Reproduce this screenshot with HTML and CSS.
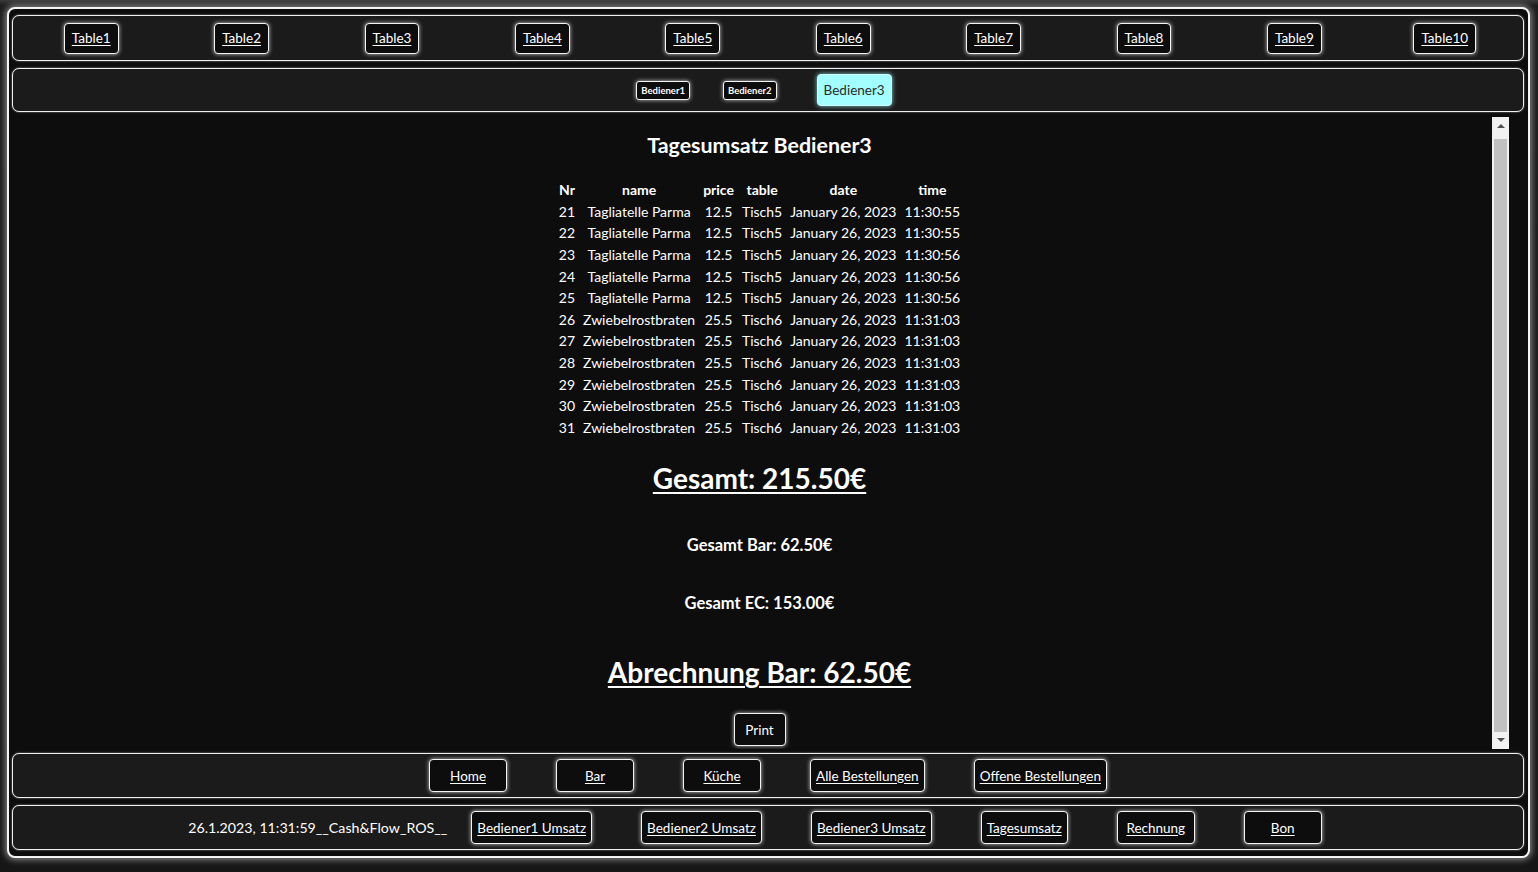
FILE: index.html
```html
<!DOCTYPE html>
<html lang="de">
<head>
<meta charset="utf-8">
<title>Cash&amp;Flow ROS</title>
<link rel="stylesheet" href="styles.css">
</head>
<body>
<div class="app">
  <div class="bar tables">
    <div class="cell"><a class="btn" href="#">Table1</a></div>
    <div class="cell"><a class="btn" href="#">Table2</a></div>
    <div class="cell"><a class="btn" href="#">Table3</a></div>
    <div class="cell"><a class="btn" href="#">Table4</a></div>
    <div class="cell"><a class="btn" href="#">Table5</a></div>
    <div class="cell"><a class="btn" href="#">Table6</a></div>
    <div class="cell"><a class="btn" href="#">Table7</a></div>
    <div class="cell"><a class="btn" href="#">Table8</a></div>
    <div class="cell"><a class="btn" href="#">Table9</a></div>
    <div class="cell"><a class="btn" href="#">Table10</a></div>
  </div>
  <div class="bar waiters">
    <button class="btn small w1">Bediener1</button>
    <button class="btn small w2">Bediener2</button>
    <button class="btn active">Bediener3</button>
  </div>
  <div class="main">
    <div class="viewport">
      <div class="report">
        <h2 class="title">Tagesumsatz Bediener3</h2>
        <table class="orders">
          <thead>
            <tr><th>Nr</th><th>name</th><th>price</th><th>table</th><th>date</th><th>time</th></tr>
          </thead>
          <tbody>
            <tr><td>21</td><td>Tagliatelle Parma</td><td>12.5</td><td>Tisch5</td><td>January 26, 2023</td><td>11:30:55</td></tr>
            <tr><td>22</td><td>Tagliatelle Parma</td><td>12.5</td><td>Tisch5</td><td>January 26, 2023</td><td>11:30:55</td></tr>
            <tr><td>23</td><td>Tagliatelle Parma</td><td>12.5</td><td>Tisch5</td><td>January 26, 2023</td><td>11:30:56</td></tr>
            <tr><td>24</td><td>Tagliatelle Parma</td><td>12.5</td><td>Tisch5</td><td>January 26, 2023</td><td>11:30:56</td></tr>
            <tr><td>25</td><td>Tagliatelle Parma</td><td>12.5</td><td>Tisch5</td><td>January 26, 2023</td><td>11:30:56</td></tr>
            <tr><td>26</td><td>Zwiebelrostbraten</td><td>25.5</td><td>Tisch6</td><td>January 26, 2023</td><td>11:31:03</td></tr>
            <tr><td>27</td><td>Zwiebelrostbraten</td><td>25.5</td><td>Tisch6</td><td>January 26, 2023</td><td>11:31:03</td></tr>
            <tr><td>28</td><td>Zwiebelrostbraten</td><td>25.5</td><td>Tisch6</td><td>January 26, 2023</td><td>11:31:03</td></tr>
            <tr><td>29</td><td>Zwiebelrostbraten</td><td>25.5</td><td>Tisch6</td><td>January 26, 2023</td><td>11:31:03</td></tr>
            <tr><td>30</td><td>Zwiebelrostbraten</td><td>25.5</td><td>Tisch6</td><td>January 26, 2023</td><td>11:31:03</td></tr>
            <tr><td>31</td><td>Zwiebelrostbraten</td><td>25.5</td><td>Tisch6</td><td>January 26, 2023</td><td>11:31:03</td></tr>
          </tbody>
        </table>
        <h1 class="total total-first">Gesamt: 215.50€</h1>
        <h4 class="sub sub-bar">Gesamt Bar: 62.50€</h4>
        <h4 class="sub sub-ec">Gesamt EC: 153.00€</h4>
        <h1 class="total total-cash">Abrechnung Bar: 62.50€</h1>
        <button class="btn print">Print</button>
      </div>
    </div>
    <div class="scrollbar" aria-hidden="true">
      <div class="sb-btn"><span class="arrow-up"></span></div>
      <div class="sb-track"><div class="sb-thumb"></div></div>
      <div class="sb-btn"><span class="arrow-down"></span></div>
    </div>
  </div>
  <div class="bar nav">
    <a class="btn wide" href="#">Home</a>
    <a class="btn wide" href="#">Bar</a>
    <a class="btn wide" href="#">Küche</a>
    <a class="btn wide" href="#">Alle Bestellungen</a>
    <a class="btn wide" href="#">Offene Bestellungen</a>
  </div>
  <div class="bar nav nav2">
    <span class="clock">26.1.2023, 11:31:59__Cash&amp;Flow_ROS__</span>
    <a class="btn wide" href="#">Bediener1 Umsatz</a>
    <a class="btn wide" href="#">Bediener2 Umsatz</a>
    <a class="btn wide" href="#">Bediener3 Umsatz</a>
    <a class="btn wide" href="#">Tagesumsatz</a>
    <a class="btn wide" href="#">Rechnung</a>
    <a class="btn wide" href="#">Bon</a>
  </div>
</div>
</body>
</html>
```

FILE: styles.css
```css
html, body {
  margin: 0;
  padding: 0;
  height: 100%;
}
body {
  background: linear-gradient(#3a3a3a 0, #1c1c1c 6px, #161616 100%);
  font-family: Lato, "Open Sans", sans-serif;
  color: #fff;
  overflow: hidden;
}
.app {
  box-sizing: border-box;
  margin: 7px 0 0 7px;
  width: 1523px;
  height: 851px;
  border: 2px solid #f4f4f4;
  border-radius: 8px;
  box-shadow: 0 0 6px 2px rgba(255, 255, 255, 0.45);
  background: #0d0d0d;
  padding: 6px 4px 6px 3px;
  display: flex;
  flex-direction: column;
}
.bar {
  box-sizing: border-box;
  background: #1b1b1b;
  border: 1.5px solid #f0f0f0;
  border-radius: 7px;
  box-shadow: 0 0 2px rgba(255, 255, 255, 0.6);
  flex: none;
}
.tables {
  height: 46px;
  display: grid;
  grid-template-columns: repeat(10, 1fr);
  align-items: center;
  padding: 0 3px;
}
.cell {
  display: flex;
  justify-content: center;
}
.btn {
  box-sizing: border-box;
  display: inline-flex;
  align-items: center;
  justify-content: center;
  height: 31px;
  padding: 0 7px;
  background: #0d0d0d;
  color: #fff;
  border: 1.5px solid #f4f4f4;
  border-radius: 4px;
  box-shadow: 0 0 4px rgba(255, 255, 255, 0.75);
  font-family: Lato, "Open Sans", sans-serif;
  font-size: 13.5px;
  text-decoration: underline;
  text-underline-offset: 2px;
  cursor: pointer;
}
.waiters {
  margin-top: 7px;
  height: 44px;
  display: flex;
  justify-content: center;
  align-items: center;
  padding-left: 2px;
  padding-right: 10px;
}
.btn.small {
  height: 19px;
  padding: 0 4px;
  font-size: 9.5px;
  font-weight: 700;
  text-decoration: none;
  border-radius: 3px;
}
.w1 { margin-right: 33px; }
.w2 { margin-right: 40px; }
.btn.active {
  height: 32px;
  padding: 0 6px;
  background: #a3ffff;
  color: #2a2a2a;
  border: 1.5px solid #cffcff;
  box-shadow: 0 0 5px rgba(160, 255, 255, 0.8);
  font-size: 13.5px;
  text-decoration: none;
}
.main {
  flex: 1;
  min-height: 0;
  margin: 5px 15px 4px 0;
  display: flex;
}
.viewport {
  flex: 1;
  min-width: 0;
  overflow: hidden;
  padding-left: 15px;
}
.scrollbar {
  flex: none;
  width: 17px;
  background: #f1f1f1;
  display: flex;
  flex-direction: column;
}
.sb-btn {
  flex: none;
  height: 17px;
  display: flex;
  align-items: center;
  justify-content: center;
}
.arrow-up,
.arrow-down {
  width: 0;
  height: 0;
  border-left: 4px solid transparent;
  border-right: 4px solid transparent;
}
.arrow-up {
  border-bottom: 4px solid #505050;
  margin-top: 1px;
}
.arrow-down {
  border-top: 4px solid #505050;
  margin-bottom: 1px;
}
.sb-track {
  flex: 1;
  display: flex;
  padding: 5px 2px 0;
}
.sb-thumb {
  flex: 1;
  background: #c1c1c1;
}
.report {
  display: flex;
  flex-direction: column;
  align-items: center;
  padding: 14px 0 8px;
}
.title {
  margin: 0;
  font-size: 21.4px;
  line-height: 28px;
  font-weight: 700;
}
.orders {
  margin-top: 20px;
  border-collapse: collapse;
  font-size: 14px;
}
.orders th,
.orders td {
  height: 21.6px;
  padding: 0 4px;
  text-align: center;
  white-space: nowrap;
}
.orders th {
  font-weight: 700;
}
.total {
  margin: 0;
  font-size: 28px;
  line-height: 34px;
  font-weight: 700;
  text-decoration: underline;
  text-decoration-thickness: 2px;
  text-underline-offset: 3px;
}
.total-first { margin-top: 23px; }
.total-cash { margin-top: 42px; }
.sub {
  margin: 0;
  font-size: 16.5px;
  line-height: 20px;
  font-weight: 700;
}
.sub-bar { margin-top: 40px; }
.sub-ec { margin-top: 38px; }
.btn.print {
  margin-top: 24px;
  height: 33px;
  min-width: 52px;
  text-decoration: none;
  font-size: 13.5px;
}
.nav {
  height: 45px;
  display: flex;
  justify-content: center;
  align-items: center;
  gap: 49px;
}
.nav2 {
  margin-top: 7px;
  padding-right: 26px;
}
.btn.wide {
  height: 33px;
  min-width: 78px;
  padding: 0 5px;
}
.clock {
  font-size: 14.2px;
  margin-right: -25px;
}
```
